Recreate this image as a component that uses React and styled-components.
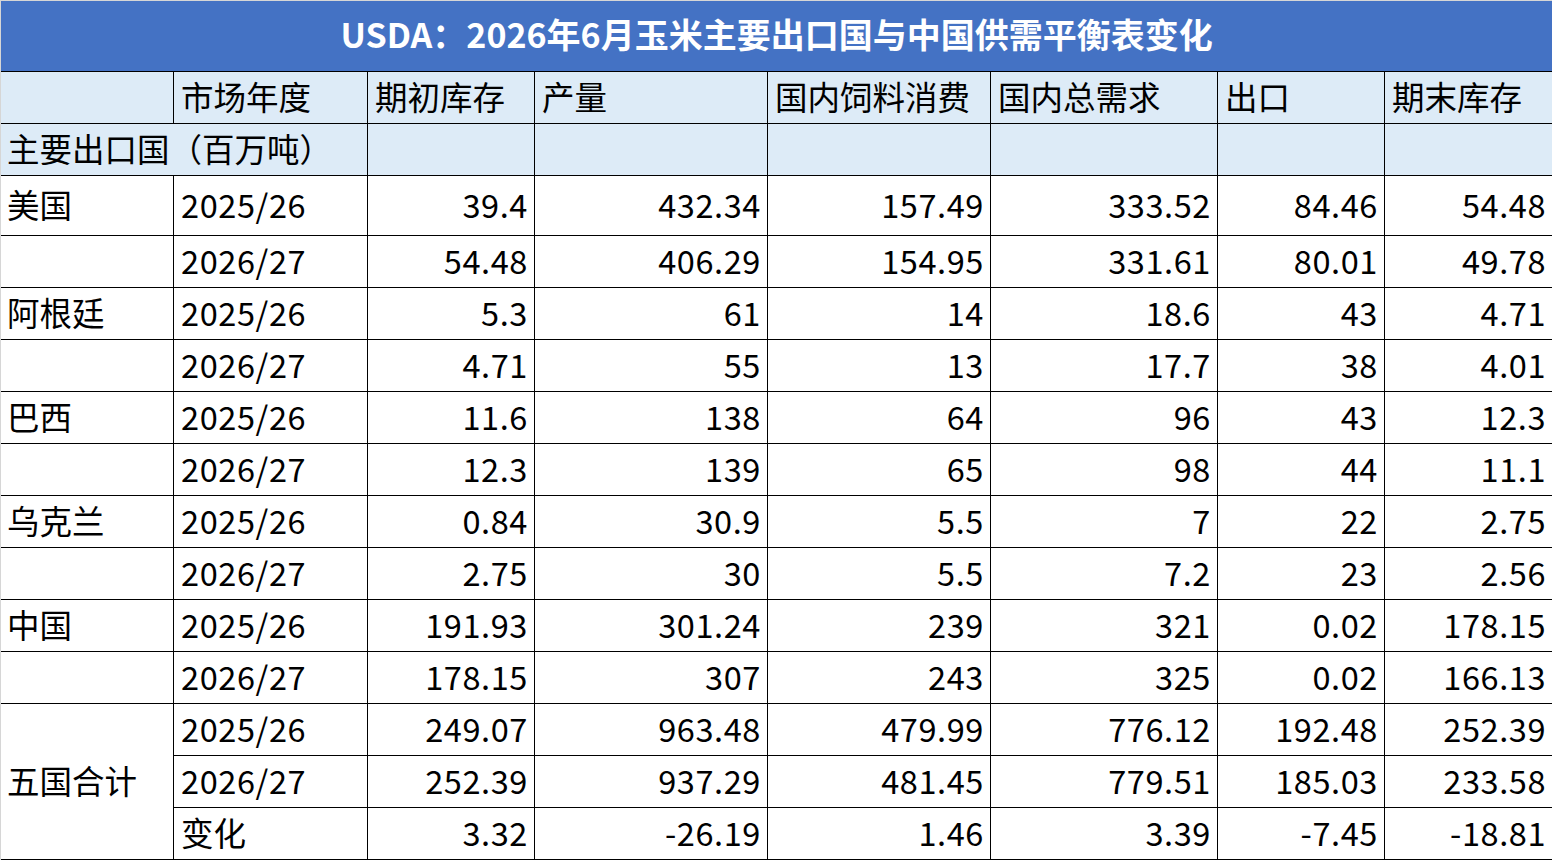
import React from 'react'
import styled, { createGlobalStyle } from 'styled-components'

const GlobalStyle = createGlobalStyle`
  html, body {
    margin: 0;
    padding: 0;
    background: #fff;
  }
  body {
    font-family: "Noto Sans CJK SC", "Noto Sans", sans-serif;
    color: #000;
  }
`

const Sheet = styled.div`
  width: 1552px;
  box-sizing: border-box;
  border: 1px solid #d6d6d6;
  border-bottom: none;
`

const Table = styled.table`
  width: 100%;
  border-collapse: separate;
  border-spacing: 0;
  table-layout: fixed;
`

const TitleCell = styled.th`
  height: 71px;
  padding: 0 0 5px;
  background: #4472c4;
  color: #fff;
  font-size: 34px;
  font-weight: 700;
  text-align: center;
  vertical-align: middle;
  border-bottom: 1px solid #000;
  box-sizing: border-box;
`

const Cell = styled.td`
  box-sizing: border-box;
  height: ${p => p.$h || 52}px;
  padding: 0 ${p => (p.$num ? 6 : 0)}px 2px ${p => (p.$num ? 0 : p.$first ? 6 : 7)}px;
  font-size: 32.5px;
  font-weight: 400;
  letter-spacing: ${p => (p.$digits ? '0.6px' : '0')};
  line-height: 1;
  white-space: nowrap;
  overflow: hidden;
  text-align: ${p => (p.$num ? 'right' : 'left')};
  vertical-align: middle;
  background: ${p => (p.$head ? '#ddebf7' : '#fff')};
  border-bottom: 1px solid #000;
  border-right: ${p => (p.$last ? 'none' : '1px solid #000')};
`

const widths = [173, 194, 167, 233, 223, 227, 167, 167]
const headers = ['市场年度', '期初库存', '产量', '国内饲料消费', '国内总需求', '出口', '期末库存']

const countries = [
  { name: '美国', rows: [
    ['2025/26', '39.4', '432.34', '157.49', '333.52', '84.46', '54.48'],
    ['2026/27', '54.48', '406.29', '154.95', '331.61', '80.01', '49.78'],
  ] },
  { name: '阿根廷', rows: [
    ['2025/26', '5.3', '61', '14', '18.6', '43', '4.71'],
    ['2026/27', '4.71', '55', '13', '17.7', '38', '4.01'],
  ] },
  { name: '巴西', rows: [
    ['2025/26', '11.6', '138', '64', '96', '43', '12.3'],
    ['2026/27', '12.3', '139', '65', '98', '44', '11.1'],
  ] },
  { name: '乌克兰', rows: [
    ['2025/26', '0.84', '30.9', '5.5', '7', '22', '2.75'],
    ['2026/27', '2.75', '30', '5.5', '7.2', '23', '2.56'],
  ] },
  { name: '中国', rows: [
    ['2025/26', '191.93', '301.24', '239', '321', '0.02', '178.15'],
    ['2026/27', '178.15', '307', '243', '325', '0.02', '166.13'],
  ] },
]

const totals = [
  ['2025/26', '249.07', '963.48', '479.99', '776.12', '192.48', '252.39'],
  ['2026/27', '252.39', '937.29', '481.45', '779.51', '185.03', '233.58'],
  ['变化', '3.32', '-26.19', '1.46', '3.39', '-7.45', '-18.81'],
]

function DataCells({ row }) {
  return row.map((v, i) => (
    <Cell
      key={i}
      $num={i > 0}
      $digits={/^[-\d./]+$/.test(v)}
      $last={i === row.length - 1}
    >
      {v}
    </Cell>
  ))
}

export default function App() {
  return (
    <>
      <GlobalStyle />
      <Sheet>
        <Table>
          <colgroup>
            {widths.map((w, i) => <col key={i} style={{ width: w }} />)}
          </colgroup>
          <thead>
            <tr>
              <TitleCell colSpan={8}>USDA：2026年6月玉米主要出口国与中国供需平衡表变化</TitleCell>
            </tr>
          </thead>
          <tbody>
            <tr>
              <Cell $head />
              {headers.map((h, i) => (
                <Cell key={h} $head $last={i === headers.length - 1}>{h}</Cell>
              ))}
            </tr>
            <tr>
              <Cell $head $first colSpan={2}>主要出口国（百万吨）</Cell>
              {[0, 1, 2, 3, 4, 5].map(i => <Cell key={i} $head $last={i === 5} />)}
            </tr>
            {countries.map((c, ci) =>
              c.rows.map((r, ri) => (
                <tr key={c.name + ri}>
                  <Cell $first $h={ci === 0 && ri === 0 ? 60 : 52}>{ri === 0 ? c.name : ''}</Cell>
                  <DataCells row={r} />
                </tr>
              ))
            )}
            {totals.map((r, ri) => (
              <tr key={'t' + ri}>
                {ri === 0 && <Cell $first rowSpan={3}>五国合计</Cell>}
                <DataCells row={r} />
              </tr>
            ))}
          </tbody>
        </Table>
      </Sheet>
    </>
  )
}
